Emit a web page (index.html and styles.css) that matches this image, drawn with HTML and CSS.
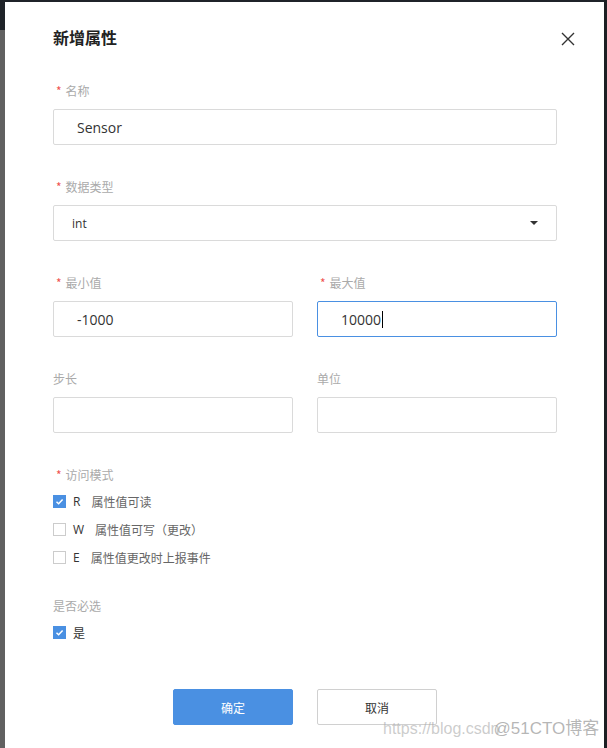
FILE: index.html
```html
<!DOCTYPE html>
<html lang="zh-CN">
<head>
<meta charset="utf-8">
<title>新增属性</title>
<link rel="stylesheet" href="styles.css">
</head>
<body>
<div class="dialog">
  <div class="header">
    <h1 class="title">新增属性</h1>
    <span class="close" aria-label="关闭">
      <svg width="24" height="24" viewBox="0 0 24 24"><path d="M6 6 L18 18 M18 6 L6 18" stroke="#333" stroke-width="1.4" fill="none"/></svg>
    </span>
  </div>

  <div class="field">
    <div class="label"><span class="req">*</span>名称</div>
    <div class="input">Sensor</div>
  </div>

  <div class="field">
    <div class="label"><span class="req">*</span>数据类型</div>
    <div class="input select"><span>int</span><span class="arrow"></span></div>
  </div>

  <div class="row">
    <div class="field">
      <div class="label"><span class="req">*</span>最小值</div>
      <div class="input">-1000</div>
    </div>
    <div class="field">
      <div class="label"><span class="req">*</span>最大值</div>
      <div class="input focused">10000<span class="caret"></span></div>
    </div>
  </div>

  <div class="row">
    <div class="field">
      <div class="label">步长</div>
      <div class="input"></div>
    </div>
    <div class="field">
      <div class="label">单位</div>
      <div class="input"></div>
    </div>
  </div>

  <div class="group">
    <div class="label"><span class="req">*</span>访问模式</div>
    <div class="check"><span class="box checked"><svg width="13" height="13" viewBox="0 0 13 13"><path d="M3.5 6.8 L5.6 8.8 L9.6 4.6" stroke="#fff" stroke-width="1.5" fill="none"/></svg></span><span class="letter">R</span><span class="desc">属性值可读</span></div>
    <div class="check"><span class="box"></span><span class="letter">W</span><span class="desc">属性值可写（更改）</span></div>
    <div class="check"><span class="box"></span><span class="letter">E</span><span class="desc">属性值更改时上报事件</span></div>
  </div>

  <div class="group second">
    <div class="label">是否必选</div>
    <div class="check"><span class="box checked"><svg width="13" height="13" viewBox="0 0 13 13"><path d="M3.5 6.8 L5.6 8.8 L9.6 4.6" stroke="#fff" stroke-width="1.5" fill="none"/></svg></span><span class="yes">是</span></div>
  </div>

  <div class="actions">
    <button class="btn primary">确定</button>
    <button class="btn">取消</button>
  </div>
</div>
<div class="watermark"><span class="wm-url">https://blog.csdn</span><span class="wm-site">@51CTO博客</span></div>
</body>
</html>
```

FILE: styles.css
```css
html, body {
  margin: 0;
  padding: 0;
}
body {
  width: 607px;
  height: 748px;
  overflow: hidden;
  position: relative;
  font-family: "Open Sans", "Noto Sans CJK SC", sans-serif;
  background:
    linear-gradient(to right, transparent 604px, #1c1f23 604px),
    linear-gradient(#1f2329 0 30px, #616161 30px);
}
.dialog {
  box-sizing: border-box;
  margin: 2px 0 0 5px;
  width: 599px;
  height: 746px;
  background: #fff;
  padding: 0 47px 0 48px;
}
.header {
  display: flex;
  justify-content: space-between;
  align-items: center;
  padding-top: 24px;
  height: 22px;
  margin-bottom: 33px;
}
.title {
  margin: 0;
  font-family: "Noto Sans CJK SC", sans-serif;
  font-size: 16px;
  font-weight: 700;
  color: #222;
  line-height: 22px;
}
.close {
  display: flex;
  margin-right: -23px;
  margin-top: 4px;
}
.field {
  margin-bottom: 32px;
}
.label {
  font-family: "Noto Sans CJK SC", sans-serif;
  font-size: 12px;
  line-height: 20px;
  height: 20px;
  color: #aaa;
  margin-bottom: 8px;
}
.req {
  color: #ef5350;
  margin: 0 4px 0 3px;
}
.input {
  box-sizing: border-box;
  height: 36px;
  border: 1px solid #dadada;
  border-radius: 2px;
  padding-left: 23px;
  font-size: 14px;
  color: #333;
  display: flex;
  align-items: center;
}
.input.focused {
  border-color: #4a90e2;
}
.caret {
  display: inline-block;
  width: 1px;
  height: 17px;
  background: #000;
  margin-left: 1px;
}
.select {
  padding-left: 18px;
  padding-right: 18px;
  justify-content: space-between;
  font-size: 12px;
}
.arrow {
  width: 0;
  height: 0;
  border-left: 4px solid transparent;
  border-right: 4px solid transparent;
  border-top: 4px solid #333;
}
.row {
  display: grid;
  grid-template-columns: 240px 240px;
  column-gap: 24px;
}
.group .label {
  margin-bottom: 2px;
}
.group.second {
  margin-top: 25px;
}
.check {
  height: 28px;
  display: flex;
  align-items: center;
  font-size: 12px;
}
.box {
  box-sizing: border-box;
  width: 13px;
  height: 13px;
  border: 1px solid #ccc;
  background: #fff;
  margin-right: 7px;
  display: flex;
}
.box.checked {
  border: none;
  background: #4a90e2;
}
.letter {
  color: #333;
  margin-right: 11px;
}
.desc {
  font-family: "Noto Sans CJK SC", sans-serif;
  color: #666;
}
.yes {
  font-family: "Noto Sans CJK SC", sans-serif;
  color: #333;
}
.actions {
  display: flex;
  justify-content: center;
  gap: 24px;
  margin-top: 43px;
}
.btn {
  box-sizing: border-box;
  width: 120px;
  height: 36px;
  border: 1px solid #d0d0d0;
  border-radius: 2px;
  background: #fff;
  color: #333;
  font-family: "Noto Sans CJK SC", sans-serif;
  font-size: 12px;
  padding: 0;
}
.btn.primary {
  background: #4a90e2;
  border-color: #4a90e2;
  color: #fff;
}
.watermark {
  position: absolute;
  left: 383px;
  top: 719px;
  font-family: "Liberation Sans", "Noto Sans CJK SC", sans-serif;
  font-size: 16px;
  line-height: 20px;
  color: rgba(170, 170, 170, 0.6);
  white-space: nowrap;
}
.wm-site {
  margin-left: -6px;
  font-size: 17px;
  color: rgba(150, 150, 150, 0.7);
}
```
